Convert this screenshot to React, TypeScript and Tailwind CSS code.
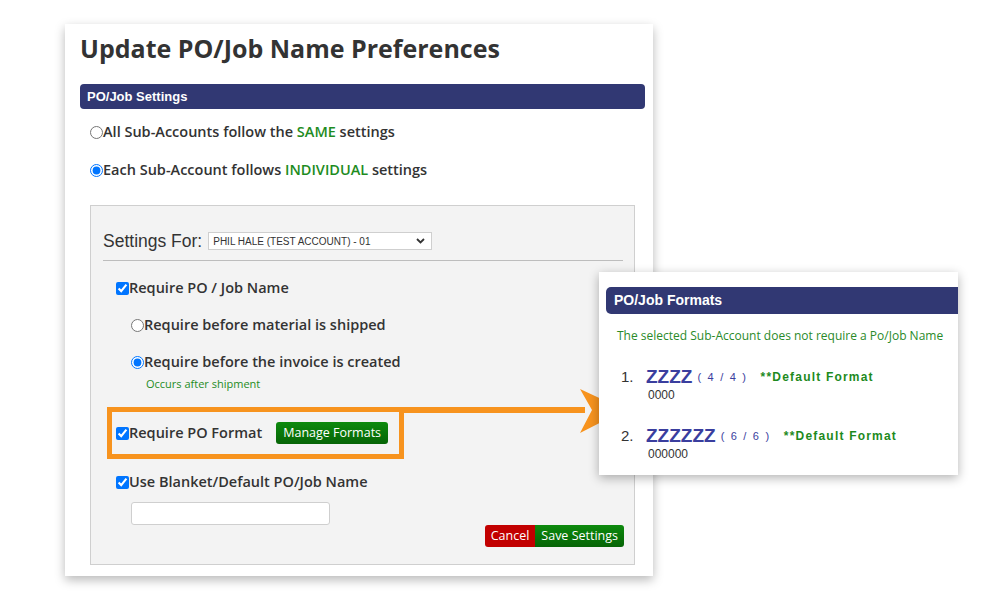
import React from 'react';

const openSans = "font-['Open_Sans',sans-serif]";
const arial = "font-['Liberation_Sans',Arial,sans-serif]";

const Radio = ({ checked }: { checked?: boolean }) => (
  <input type="radio" checked={!!checked} readOnly className="m-0 h-[13px] w-[13px]" />
);

const Check = () => <input type="checkbox" checked readOnly className="m-0 h-[13px] w-[13px]" />;

const FormatItem = ({ n, code, len, sample }: { n: number; code: string; len: string; sample: string }) => (
  <div className={`${arial} pl-[22px]`}>
    <div className="flex h-[22px] items-center">
      <span className="w-[25px] text-[15px] text-[#333]">{n}.</span>
      <span className="text-[19px] font-bold text-[#3a3e9e]">{code}</span>
      <span className="ml-[5px] text-[11px] tracking-[1.7px] text-[#3a3e9e]">( {len} )</span>
      <span className="ml-[13px] text-[12px] font-bold tracking-[1.2px] text-[#1d8a1d]">**Default Format</span>
    </div>
    <div className="pl-[27px] text-[12px] leading-[14px] text-[#333]">{sample}</div>
  </div>
);

export default function App() {
  return (
    <div className="relative h-[600px] w-[1000px] overflow-hidden bg-white pl-[65px] pt-[24px]">
      {/* main card */}
      <div className="h-[552px] w-[588px] bg-white pl-[15px] pr-[8px] pt-[8px] shadow-[0_4px_10px_rgba(0,0,0,0.28)]">
        <h1 className={`${openSans} text-[25px] font-bold leading-[32px] text-[#333]`}>
          Update PO/Job Name Preferences
        </h1>
        <div className={`${arial} mt-[20px] flex h-[25px] items-center rounded-[4px] bg-[#313873] pl-[7px] text-[13px] font-bold text-white`}>
          PO/Job Settings
        </div>

        <div className={`${openSans} text-[14.5px] font-semibold text-[#333]`}>
          <label className="mt-[13px] flex h-[20px] items-center pl-[10px]">
            <Radio />
            <span>
              All Sub-Accounts follow the <span className="text-[#1e8c1e]">SAME</span> settings
            </span>
          </label>
          <label className="mt-[18px] flex h-[20px] items-center pl-[10px]">
            <Radio checked />
            <span>
              Each Sub-Account follows <span className="text-[#1e8c1e]">INDIVIDUAL</span> settings
            </span>
          </label>
        </div>

        {/* settings panel */}
        <div className="ml-[10px] mt-[25px] h-[360px] w-[545px] border border-[#cfcfcf] bg-[#f3f3f3] pl-[12px] pr-[10px] pt-[26px]">
          <div className="flex h-[18px] items-center">
            <span className={`${arial} text-[17.5px] text-[#333]`}>Settings For:</span>
            <div className={`${arial} ml-[6px] flex h-[18px] w-[224px] items-center justify-between border border-[#cfcfcf] bg-white pl-[4px] pr-[6px] text-[10px] text-[#333]`}>
              <span>PHIL HALE (TEST ACCOUNT) - 01</span>
              <svg width="9" height="6" viewBox="0 0 9 6" fill="none" stroke="#333" strokeWidth="1.8">
                <path d="M1 1l3.5 3.5L8 1" />
              </svg>
            </div>
          </div>
          <div className="mr-[1px] mt-[10px] h-px bg-[#bdbdbd]" />

          <div className={`${openSans} text-[14.5px] font-semibold text-[#333]`}>
            <label className="mt-[17px] flex h-[20px] items-center pl-[13px]">
              <Check />
              <span>Require PO / Job Name</span>
            </label>
            <label className="mt-[17px] flex h-[20px] items-center pl-[28px]">
              <Radio />
              <span>Require before material is shipped</span>
            </label>
            <label className="mt-[17px] flex h-[20px] items-center pl-[28px]">
              <Radio checked />
              <span>Require before the invoice is created</span>
            </label>
            <div className="mt-[5px] h-[14px] pl-[43px] text-[11px] font-normal leading-[14px] text-[#1e8c1e]">
              Occurs after shipment
            </div>

            <div className="ml-[4px] mt-[16px] flex h-[52px] w-[297px] items-center border-[5px] border-[#f7931e] pl-[4px]">
              <Check />
              <span>Require PO Format</span>
              <button className="ml-[14px] h-[22px] rounded-[3px] bg-gradient-to-b from-[#0d8a0d] to-[#066406] px-[7px] text-[12.5px] font-normal text-white">
                Manage Formats
              </button>
            </div>

            <label className="mt-[13px] flex h-[20px] items-center pl-[13px]">
              <Check />
              <span>Use Blanket/Default PO/Job Name</span>
            </label>
            <div className="ml-[28px] mt-[10px] h-[23px] w-[199px] rounded-[3px] border border-[#cfcfcf] bg-white" />
            <div className="flex justify-end">
              <button className="h-[22px] rounded-l-[3px] bg-[#c20000] px-[6px] text-[12.5px] font-normal text-white">
                Cancel
              </button>
              <button className="h-[22px] rounded-r-[3px] bg-gradient-to-b from-[#0d8a0d] to-[#066406] px-[6px] text-[12.5px] font-normal text-white">
                Save Settings
              </button>
            </div>
          </div>
        </div>
      </div>

      {/* callout arrow */}
      <svg className="absolute left-[400px] top-[386px]" width="230" height="52" viewBox="0 0 230 52">
        <rect x="0" y="21" width="185" height="6" fill="#f7931e" />
        <polygon points="180,3 225,24 180,47 192,24" fill="#f7931e" />
      </svg>

      {/* formats popup */}
      <div className="absolute left-[599px] top-[272px] h-[203px] w-[359px] bg-white pt-[15px] shadow-[0_3px_10px_rgba(0,0,0,0.3)]">
        <div className={`${arial} ml-[7px] flex h-[27px] items-center rounded-l-[5px] bg-[#313873] pl-[8px] text-[14px] font-bold text-white`}>
          PO/Job Formats
        </div>
        <div className={`${openSans} mt-[14px] pl-[18px] text-[12px] leading-[16px] text-[#2a8a2a]`}>
          The selected Sub-Account does not require a Po/Job Name
        </div>
        <div className="mt-[22px]">
          <FormatItem n={1} code="ZZZZ" len="4 / 4" sample="0000" />
        </div>
        <div className="mt-[23px]">
          <FormatItem n={2} code="ZZZZZZ" len="6 / 6" sample="000000" />
        </div>
      </div>
    </div>
  );
}
